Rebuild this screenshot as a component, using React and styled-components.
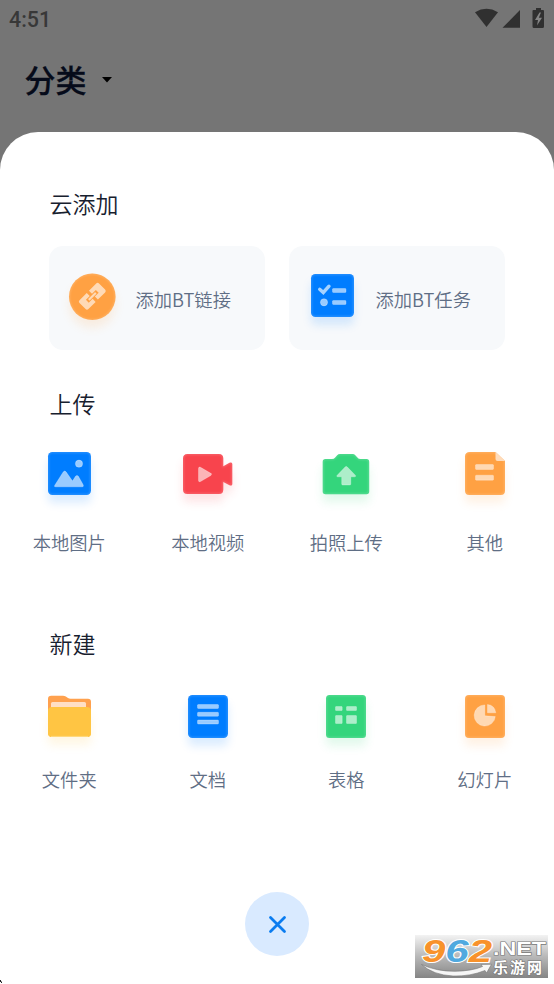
import React from "react";
import styled, { createGlobalStyle } from "styled-components";

const GlobalStyle = createGlobalStyle`
  * { box-sizing: border-box; }
  html, body { margin: 0; padding: 0; }
  body {
    font-family: Roboto, "Noto Sans CJK SC", sans-serif;
    background: #757575;
    overflow: hidden;
  }
`;

const Screen = styled.div`
  position: relative;
  width: 554px;
  height: 984px;
  display: flex;
  flex-direction: column;
  background: #757575;
  overflow: hidden;
`;

const StatusBar = styled.div`
  height: 40px;
  display: flex;
  align-items: center;
  justify-content: space-between;
  padding-left: 9px;
  color: #303030;
  flex: none;
`;

const Clock = styled.span`
  font-size: 21.4px;
  font-weight: 500;
  line-height: 40px;
  color: #383838;
`;

const StatusIcons = styled.svg`
  width: 84px;
  height: 40px;
  display: block;
`;

const Header = styled.header`
  height: 92px;
  flex: none;
  display: flex;
  align-items: flex-start;
  padding: 20px 0 0 24.5px;
`;

const PageTitle = styled.h1`
  margin: 0;
  font-size: 31px;
  line-height: 44px;
  font-weight: 500;
  color: #060b1a;
  -webkit-text-stroke: 0.3px #060b1a;
`;

const Caret = styled.svg`
  width: 12px;
  height: 8px;
  margin: 16px 0 0 14.5px;
`;

const Sheet = styled.main`
  flex: 1;
  min-height: 0;
  background: #fff;
  border-radius: 38px 38px 0 0;
  display: flex;
  flex-direction: column;
`;

const SectionTitle = styled.h2`
  margin: 0;
  padding: 1px 0 0 49.5px;
  height: 34px;
  font-size: 23px;
  line-height: 34px;
  font-weight: 350;
  color: #17202e;
`;

const CloudSection = styled.section`
  padding-top: 56px;
  height: 256px;
  flex: none;
`;

const CardRow = styled.div`
  display: grid;
  grid-template-columns: 216px 216px;
  column-gap: 24px;
  padding: 24px 0 0 49px;
`;

const Card = styled.button`
  height: 104px;
  border: 0;
  border-radius: 14px;
  background: #f7f9fb;
  display: flex;
  align-items: center;
  padding: 0 0 0 8px;
  font-family: inherit;
`;

const CardLabel = styled.span`
  margin-left: 8.5px;
  padding-top: 1px;
  font-family: "Noto Sans CJK SC", sans-serif;
  font-size: 18.3px;
  font-weight: 350;
  line-height: 26px;
  color: #5f6e85;
  white-space: nowrap;
`;

const GridSection = styled.section`
  height: 240px;
  flex: none;
`;

const ItemGrid = styled.div`
  display: grid;
  grid-template-columns: repeat(4, 1fr);
  padding-top: ${(p) => p.$top}px;
`;

const Item = styled.button`
  border: 0;
  padding: 0;
  background: none;
  display: flex;
  flex-direction: column;
  align-items: center;
  gap: ${(p) => p.$gap}px;
  font-family: inherit;
`;

const ItemLabel = styled.span`
  font-size: 18.3px;
  font-weight: 350;
  line-height: 26px;
  color: #5f6e85;
`;

const IconSvg = styled.svg`
  width: 70px;
  height: 70px;
  display: block;
  overflow: visible;
  flex: none;
`;

const Footer = styled.footer`
  display: flex;
  justify-content: center;
  padding-top: 24px;
`;

const CloseButton = styled.button`
  width: 64px;
  height: 64px;
  border: 0;
  padding: 0;
  border-radius: 50%;
  background: #d9eaff;
  display: grid;
  place-items: center;
`;

const CloseGlyph = styled.svg`
  width: 20px;
  height: 20px;
`;

const SiteBadge = styled.svg`
  position: absolute;
  right: 6px;
  bottom: 6px;
  width: 133px;
  height: 43px;
`;

const CornerMark = styled.svg`
  position: absolute;
  left: 0;
  bottom: 0;
  width: 3px;
  height: 4px;
`;

const BLUE = "#007dff";
const ORANGE = "#ffa143";
const GREEN = "#34d57c";
const RED = "#f8444d";

function Icon({ id, color, shape, children }) {
  return (
    <IconSvg viewBox="0 0 70 70">
      <defs>
        <filter id={`${id}-shadow`} x="-40%" y="-40%" width="180%" height="190%">
          <feGaussianBlur stdDeviation="5" />
        </filter>
        <filter id={`${id}-soft`} x="-20%" y="-20%" width="140%" height="140%">
          <feGaussianBlur stdDeviation="1.2" />
        </filter>
        <clipPath id={`${id}-clip`}>{shape}</clipPath>
      </defs>
      <g fill={color} opacity="0.14" transform="translate(0 8)" filter={`url(#${id}-shadow)`}>
        {shape}
      </g>
      <g fill={color}>{shape}</g>
      <g clipPath={`url(#${id}-clip)`}>
        <g fill="none" stroke="#fff" strokeWidth="1.5" opacity="0.25" filter={`url(#${id}-soft)`}>
          {shape}
        </g>
      </g>
      {children}
    </IconSvg>
  );
}

const glass = { fill: "#fff", fillOpacity: 0.6, stroke: "#fff", strokeOpacity: 0.25, strokeWidth: 1 };

const LinkIcon = () => (
  <Icon id="link" color={ORANGE} shape={<circle cx="35.3" cy="33.7" r="23.3" />}>
    <g transform="translate(35.3 33.3) rotate(-45)" fill="#ffdab6">
      <path d="M-1.6 -6.3H-11.8Q-13.8 -6.3 -13.8 -4.3V4.3Q-13.8 6.3 -11.8 6.3H-1.6V2H-7V-2H-1.6Z" />
      <path d="M1.6 -6.3H11.8Q13.8 -6.3 13.8 -4.3V4.3Q13.8 6.3 11.8 6.3H1.6V2H7V-2H1.6Z" />
      <rect x="-5" y="-1.1" width="10" height="2.2" rx="0.6" />
    </g>
  </Icon>
);

const TaskIcon = () => (
  <Icon id="task" color={BLUE} shape={<rect x="14" y="11" width="43" height="43" rx="4.5" />}>
    <path d="M22.7 26.3L26.3 29.5L32 23.2" fill="none" stroke="#a6d3ff" strokeWidth="3.4" strokeLinecap="round" />
    <circle cx="27" cy="39.3" r="3.6" {...glass} />
    <rect x="35.5" y="25.5" width="13.5" height="4" rx="0.8" {...glass} />
    <rect x="35.5" y="37.5" width="13.5" height="4" rx="0.8" {...glass} />
  </Icon>
);

const ImageIcon = () => (
  <Icon id="image" color={BLUE} shape={<rect x="14" y="12" width="43" height="43" rx="4.5" />}>
    <circle cx="45" cy="23.7" r="3.6" {...glass} />
    <path d="M20.8 45.2L29.2 32Q30.7 30 32.2 32L38.5 41L41.5 36.3Q43 34.5 44.4 36.3L49 44.5Q50 46.8 48.3 46.8H21.8Q19.8 46.8 20.8 45.2Z" {...glass} />
  </Icon>
);

const VideoIcon = () => (
  <Icon
    id="video"
    color={RED}
    shape={<path d="M14.5 14H46Q50.3 14 50.3 18.5V26.3L56.5 22.8Q59.3 21.8 59.3 24V44Q59.3 46.2 56.5 45.2L50.3 42V49.5Q50.3 54 46 54H14.5Q10 54 10 49.5V18.5Q10 14 14.5 14Z" />}
  >
    <path d="M25.5 28.5Q25.5 26.3 27.5 27.3L37.8 33.3Q39.3 34.4 37.8 35.5L27.5 41.5Q25.5 42.5 25.5 40.3Z" {...glass} />
  </Icon>
);

const CameraIcon = () => (
  <Icon
    id="camera"
    color={GREEN}
    shape={<path d="M14.5 19H21Q23 19 24.2 17.5L26.2 15.2Q27.3 14 29 14H41.5Q43.2 14 44.3 15.2L46.4 17.5Q47.5 19 49.5 19H55.5Q58.2 19 58.2 21.7V51.5Q58.2 54.3 55.5 54.3H14.5Q11.7 54.3 11.7 51.5V21.7Q11.7 19 14.5 19Z" />}
  >
    <path d="M34.3 26.8Q35.2 26 36.1 26.8L44.5 35.4Q45 36.7 43.7 36.8H39.8V44Q39.8 45 38.8 45H31.7Q30.7 45 30.7 44V36.8H26.7Q25.3 36.7 26 35.4Z" {...glass} />
  </Icon>
);

const OtherIcon = () => (
  <Icon id="other" color={ORANGE} shape={<path d="M20 12H45.5L55 21V50.5Q55 55 50.5 55H19.5Q15 55 15 50.5V16.5Q15 12 20 12Z" />}>
    <path d="M45.5 12L55 21H47.5Q45.5 21 45.5 19Z" fill="#ffdcbb" />
    <rect x="25.5" y="24.5" width="18" height="5" rx="0.8" {...glass} />
    <rect x="25.5" y="35.2" width="18" height="5" rx="0.8" {...glass} />
  </Icon>
);

const FolderIcon = () => (
  <Icon id="folder" color="#ffc543" shape={<rect x="14" y="25" width="43" height="30" rx="4" />}>
    <path d="M14 30V17Q14 13.7 17.3 13.7H29Q30.6 13.7 31.8 14.6L34 16.1Q35 16.7 36.5 16.7H54Q57 16.7 57 19.7V30Z" fill="#ffa14e" />
    <path d="M17 27V21.5Q17 20 18.5 20H50.5Q52 20 52 21.5V27Z" fill="#ffdfc5" />
    <rect x="14" y="25" width="43" height="30" rx="4" fill="#ffc543" />
    <path d="M17 54.4H54" stroke="#ffdf93" strokeWidth="0.8" />
  </Icon>
);

const DocIcon = () => (
  <Icon id="doc" color={BLUE} shape={<rect x="15" y="13" width="40" height="43" rx="4.5" />}>
    {[22.5, 30.3, 38].map((y) => (
      <rect key={y} x="24.5" y={y} width="21" height="4" rx="0.8" {...glass} />
    ))}
  </Icon>
);

const TableIcon = () => (
  <Icon id="table" color={GREEN} shape={<rect x="15" y="13" width="40" height="43" rx="3.5" />}>
    <rect x="24.5" y="24.5" width="6.7" height="4" rx="0.5" {...glass} />
    <rect x="35.5" y="24.5" width="10" height="4" rx="0.5" {...glass} />
    <rect x="24.5" y="33.5" width="6.7" height="8" rx="0.5" {...glass} />
    <rect x="35.5" y="33.5" width="10" height="8" rx="0.5" {...glass} />
  </Icon>
);

const SlidesIcon = () => (
  <Icon id="slides" color={ORANGE} shape={<rect x="15" y="13" width="40" height="43" rx="4" />}>
    <path d="M34.8 22.9A10.6 10.6 0 1 0 45.3 34.6L34.8 33.8Z" {...glass} />
    <path d="M37.5 22.5Q44.8 23.2 45.8 30.8H37.5Z" {...glass} />
  </Icon>
);

const uploads = [
  ["本地图片", ImageIcon],
  ["本地视频", VideoIcon],
  ["拍照上传", CameraIcon],
  ["其他", OtherIcon],
];

const creations = [
  ["文件夹", FolderIcon],
  ["文档", DocIcon],
  ["表格", TableIcon],
  ["幻灯片", SlidesIcon],
];

function ActionGrid({ title, items, top, gap }) {
  return (
    <GridSection>
      <SectionTitle>{title}</SectionTitle>
      <ItemGrid $top={top}>
        {items.map(([label, Glyph]) => (
          <Item key={label} $gap={gap}>
            <Glyph />
            <ItemLabel>{label}</ItemLabel>
          </Item>
        ))}
      </ItemGrid>
    </GridSection>
  );
}

function Watermark() {
  return (
    <SiteBadge viewBox="0 0 133 43">
      <defs>
        <linearGradient id="badge-bg" x1="0" y1="0" x2="0" y2="1">
          <stop offset="0" stopColor="#f3f3f3" />
          <stop offset="0.5" stopColor="#b8b8b8" />
          <stop offset="1" stopColor="#858585" />
        </linearGradient>
      </defs>
      <rect width="133" height="43" fill="url(#badge-bg)" />
      <text
        x="7"
        y="26.5"
        textLength="70"
        lengthAdjust="spacingAndGlyphs"
        fontFamily="'Liberation Sans', sans-serif"
        fontWeight="700"
        fontStyle="italic"
        fontSize="32"
        stroke="#fff"
        strokeWidth="2"
        paintOrder="stroke"
      >
        <tspan fill="#f8922b">9</tspan>
        <tspan fill="#50a9df">6</tspan>
        <tspan fill="#f8922b">2</tspan>
      </text>
      <path
        d="M6.5 29.5Q22 36.5 40 36.3Q57 36 67.5 31.5L66 29.5L76.5 29.3L71.5 38L70 35.5Q55 41.5 38 41Q18 40 6.5 29.5Z"
        fill="#f6f6f6"
        stroke="#777"
        strokeWidth="0.6"
      />
      <g fill="#fff" stroke="#777" strokeWidth="1.2" paintOrder="stroke">
        <text x="78" y="20" fontFamily="'Liberation Sans', sans-serif" fontWeight="700" fontSize="18" textLength="53" lengthAdjust="spacingAndGlyphs">.NET</text>
        <text x="78" y="38" fontFamily="'Noto Sans CJK SC', sans-serif" fontWeight="700" fontSize="15" textLength="49">乐游网</text>
      </g>
    </SiteBadge>
  );
}

export default function App() {
  return (
    <>
      <GlobalStyle />
      <Screen>
        <StatusBar>
          <Clock>4:51</Clock>
          <StatusIcons viewBox="470 0 84 40" fill="#303030">
            <path d="M475 12.2Q486.5 5.5 498 12.2L486.5 27Z" />
            <path d="M502.5 27.8L520 10V27.8Z" />
            <path d="M536 8H541V10H543Q544 10 544 11V26.5Q544 28 542.5 28H534Q532.5 28 532.5 26.5V11Q532.5 10 533.5 10H536Z" />
            <path d="M539.5 12.5L535 20H538L537 25.5L542 17.8H538.8L541 12.5Z" fill="#858585" />
          </StatusIcons>
        </StatusBar>
        <Header>
          <PageTitle>分类</PageTitle>
          <Caret viewBox="0 0 12 8">
            <path d="M1 1H11L6 6.5Z" fill="#000" />
          </Caret>
        </Header>
        <Sheet>
          <CloudSection>
            <SectionTitle>云添加</SectionTitle>
            <CardRow>
              <Card>
                <LinkIcon />
                <CardLabel>添加BT链接</CardLabel>
              </Card>
              <Card>
                <TaskIcon />
                <CardLabel>添加BT任务</CardLabel>
              </Card>
            </CardRow>
          </CloudSection>
          <ActionGrid title="上传" items={uploads} top={18} gap={21} />
          <ActionGrid title="新建" items={creations} top={20} gap={16} />
          <Footer>
            <CloseButton aria-label="关闭">
              <CloseGlyph viewBox="0 0 20 20">
                <path d="M3.5 3.5L17.5 17.5M17.5 3.5L3.5 17.5" stroke="#0a7cf0" strokeWidth="2.8" strokeLinecap="round" />
              </CloseGlyph>
            </CloseButton>
          </Footer>
        </Sheet>
        <Watermark />
        <CornerMark viewBox="0 0 3 4">
          <path d="M0 0H1V1.5H2V3H1V2H0Z" fill="#222" />
        </CornerMark>
      </Screen>
    </>
  );
}
